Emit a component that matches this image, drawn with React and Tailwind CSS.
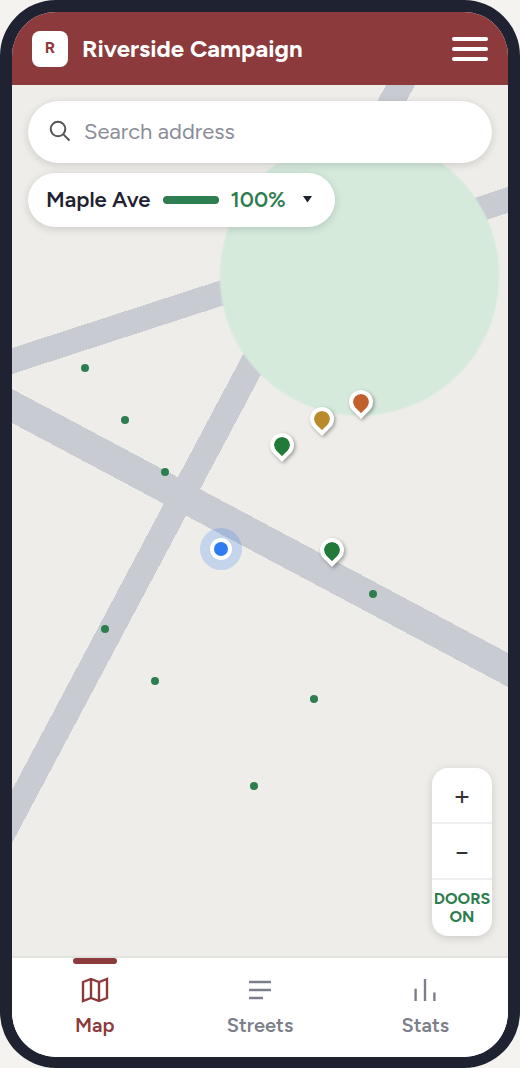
import React, { useState } from "react";

// ── Map data (positions are relative to the map area) ───────────────────────
const doors = [
  "left-[14%] top-[32%]",
  "left-[22%] top-[38%]",
  "left-[30%] top-[44%]",
  "left-[18%] top-[62%]",
  "left-[28%] top-[68%]",
  "left-[60%] top-[70%]",
  "left-[48%] top-[80%]",
  "left-[72%] top-[58%]",
];

const pins = [
  { place: "left-[52%] top-[40%]", color: "bg-[#217a38]" },
  { place: "left-[60%] top-[37%]", color: "bg-[#b98a2b]" },
  { place: "left-[68%] top-[35%]", color: "bg-[#c1622d]" },
  { place: "left-[62%] top-[52%]", color: "bg-[#217a38]" },
];

// ── Icons ────────────────────────────────────────────────────────────────────
const SearchIcon = () => (
  <svg className="w-6 h-6 shrink-0" viewBox="0 0 24 24" fill="none" stroke="#555555" strokeWidth="2">
    <circle cx="10" cy="10" r="7.3" />
    <path d="M15.4 15.4L21.5 21.5" />
  </svg>
);

const MapIcon = () => (
  <svg className="w-7 h-7" viewBox="0 0 28 28" fill="none" stroke="currentColor" strokeWidth="2.4">
    <path d="M2 6l8-3 8 3 8-3v19l-8 3-8-3-8 3zM10 3v19M18 6v19" />
  </svg>
);

const StreetsIcon = () => (
  <svg className="w-7 h-7" viewBox="0 0 28 28" fill="none" stroke="currentColor" strokeWidth="2.4">
    <path d="M3 6h22M3 14h22M3 22h14" />
  </svg>
);

const StatsIcon = () => (
  <svg className="w-7 h-7" viewBox="0 0 28 28" fill="none" stroke="currentColor" strokeWidth="2.4">
    <path d="M4.6 25V12.8M14 25V3M23.4 25V16.6" />
  </svg>
);

const tabs = [
  { id: "map", label: "Map", Icon: MapIcon },
  { id: "streets", label: "Streets", Icon: StreetsIcon },
  { id: "stats", label: "Stats", Icon: StatsIcon },
];

// ── Roads and park ───────────────────────────────────────────────────────────
const MapBackground = () => (
  <svg className="absolute inset-0 w-full h-full" viewBox="0 0 496 871" preserveAspectRatio="none" aria-hidden="true">
    <defs>
      <radialGradient id="park">
        <stop offset="0.98" stopColor="#d5eadb" />
        <stop offset="1" stopColor="#d5eadb" stopOpacity="0" />
      </radialGradient>
    </defs>
    <g fill="#c9cbd3" shapeRendering="crispEdges">
      <path d="M0 304L496 568V602L0 338z" />
      <path d="M374 0H403L0 758V705z" />
      <path d="M0 263L496 102V128L0 289z" />
    </g>
    <circle cx="347.5" cy="191" r="141" fill="url(#park)" />
  </svg>
);

const App = () => {
  const [tab, setTab] = useState("map");
  const [query, setQuery] = useState("");
  const [showDoors, setShowDoors] = useState(true);

  return (
    <div className="min-h-screen flex bg-[#f4f3ef] font-['Figtree','Lato',sans-serif] text-[#1f2230]">
      <div className="flex-1 flex flex-col border-12 border-b-[11px] border-[#1f2230] rounded-[56px] overflow-hidden bg-white">

        {/* ── Header ── */}
        <header className="flex items-center gap-3.5 h-[73px] px-5 bg-[#8c3a3b]">
          <div className="flex items-center justify-center w-9 h-9 pb-0.5 rounded-lg bg-white text-[#8c3a3b] text-base font-bold">R</div>
          <h1 className="flex-1 text-white text-2xl font-bold">Riverside Campaign</h1>
          <button type="button" aria-label="Menu" className="flex flex-col gap-1.5 w-9">
            <span className="h-1 w-full rounded-sm bg-white" />
            <span className="h-1 w-full rounded-sm bg-white" />
            <span className="h-1 w-full rounded-sm bg-white" />
          </button>
        </header>

        {/* ── Map ── */}
        <main className="relative flex-1 flex flex-col bg-[#eeede9] overflow-hidden">
          <MapBackground />

          {showDoors && doors.map((place) => (
            <span key={place} className={`absolute w-2 h-2 rounded-full bg-[#2e7d4f] ${place}`} />
          ))}

          {pins.map(({ place, color }) => (
            <span
              key={place}
              className={`absolute w-6 h-6 -rotate-45 rounded-full rounded-bl-none border-4 border-white bg-clip-padding shadow-[0_2px_4px_rgba(0,0,0,0.35)] ${color} ${place}`}
            />
          ))}

          {/* Current location */}
          <span className="absolute left-[40%] top-[52%] w-[22px] h-[22px] rounded-full border-4 border-white bg-[#2f7bf0] shadow-[0_0_0_10px_rgba(47,123,240,0.22)]" />

          <div className="relative flex-1 flex flex-col items-start gap-2.5 px-4 pt-4 pb-5">
            <label className="flex items-center gap-3 w-full h-[62px] px-5 pb-0.5 rounded-full bg-white shadow-[0_2px_8px_rgba(0,0,0,0.15)]">
              <SearchIcon />
              <input
                type="text"
                aria-label="Search address"
                placeholder="Search address"
                value={query}
                onChange={(e) => setQuery(e.target.value)}
                className="flex-1 min-w-0 text-[22px] outline-none placeholder:text-[#8a8d96]"
              />
            </label>

            <button type="button" className="flex items-center gap-3 h-[54px] pl-[18px] pr-[22px] rounded-full bg-white text-[22px] font-medium shadow-[0_2px_8px_rgba(0,0,0,0.15)]">
              <span className="pb-0.5 font-semibold">Maple Ave</span>
              <span className="w-14 h-2 rounded-full bg-[#2e7d4f]" />
              <span className="pb-0.5 font-semibold text-[#2e7d4f]">100%</span>
              <svg className="w-[11px] h-2 mb-0.5 ml-1" viewBox="0 0 11 8" fill="currentColor" aria-hidden="true">
                <path d="M1 1h9L5.5 7.5z" />
              </svg>
            </button>

            {/* Zoom + doors toggle */}
            <div className="mt-auto self-end flex flex-col w-[60px] rounded-2xl overflow-hidden bg-white shadow-[0_2px_8px_rgba(0,0,0,0.15)]">
              <button type="button" aria-label="Zoom in" className="h-14 border-b-2 border-[#eeeeee] text-[28px] text-[#333333]">+</button>
              <button type="button" aria-label="Zoom out" className="h-14 border-b-2 border-[#eeeeee] text-[28px] text-[#333333]">−</button>
              <button
                type="button"
                onClick={() => setShowDoors(!showDoors)}
                className="h-14 text-base leading-[18px] font-bold text-[#2e7d4f]"
              >
                DOORS<br />{showDoors ? "ON" : "OFF"}
              </button>
            </div>
          </div>
        </main>

        {/* ── Bottom tabs ── */}
        <nav className="grid grid-cols-3 h-[101px] border-t-2 border-[#e2e2dc] bg-white">
          {tabs.map(({ id, label, Icon }) => (
            <button
              key={id}
              type="button"
              onClick={() => setTab(id)}
              className={`flex flex-col items-center text-xl leading-[26px] font-semibold ${tab === id ? "text-[#8c3a3b]" : "text-[#7c7f8a]"}`}
            >
              <span className={`w-11 h-1.5 mb-3 rounded-full ${tab === id ? "bg-[#8c3a3b]" : "bg-transparent"}`} />
              <Icon />
              <span className="mt-2">{label}</span>
            </button>
          ))}
        </nav>
      </div>
    </div>
  );
};

export default App;
